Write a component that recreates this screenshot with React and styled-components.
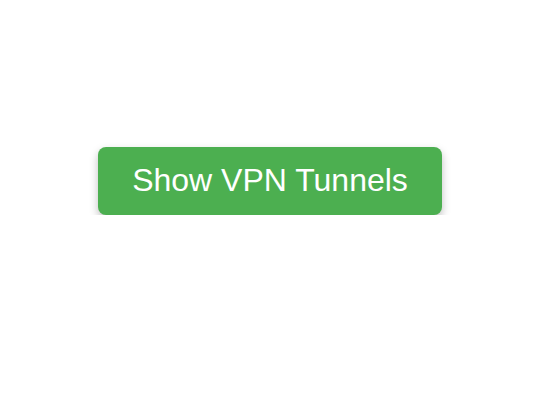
import styled, { createGlobalStyle } from 'styled-components';

const Global = createGlobalStyle`
  body {
    margin: 0;
    background: #ffffff;
    font-family: 'Liberation Sans', Arial, sans-serif;
  }
`;

const Page = styled.div`
  display: flex;
  justify-content: center;
  padding-top: 147px;
`;

const Button = styled.button`
  background-color: #4caf50;
  color: #ffffff;
  border: none;
  border-radius: 8px;
  padding: 15px 34px 16px;
  font-family: 'Liberation Sans', Arial, sans-serif;
  font-size: 32px;
  line-height: 37px;
  cursor: pointer;
  box-shadow: 0 4px 8px rgba(0, 0, 0, 0.25);
`;

const App = () => (
  <>
    <Global />
    <Page>
      <Button>Show VPN Tunnels</Button>
    </Page>
  </>
);

export default App;
